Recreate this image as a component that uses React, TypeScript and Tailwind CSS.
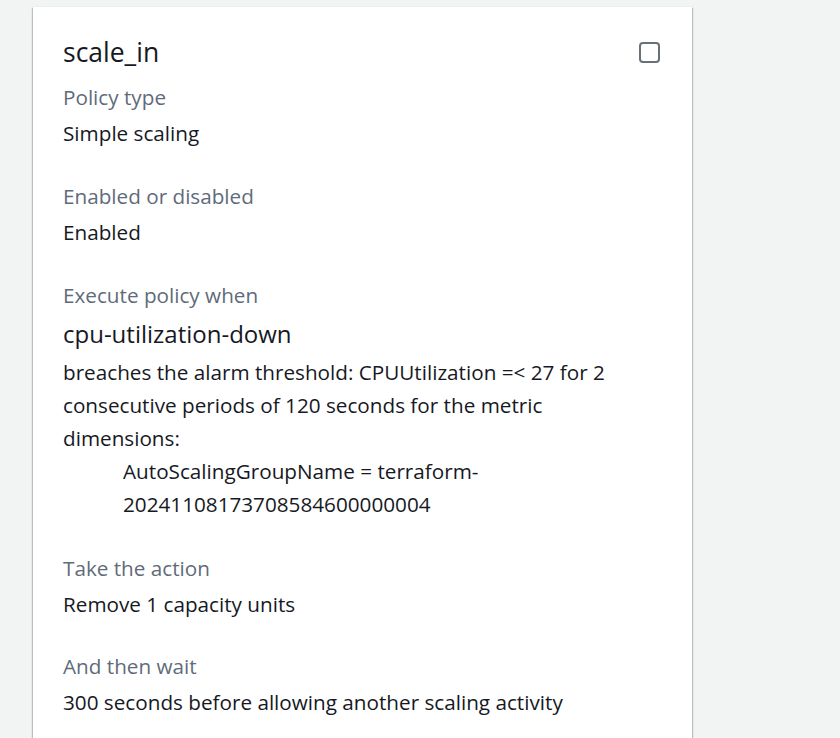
import React from 'react';

const Field: React.FC<{ label: string; children: React.ReactNode }> = ({ label, children }) => (
  <div className="flex flex-col">
    <div className="text-[20.7px] leading-[26px] text-[#5f6b7a]">{label}</div>
    <div className="mt-[10px] text-[20.7px] leading-[26px] text-[#16191f]">{children}</div>
  </div>
);

export default function App() {
  return (
    <div
      className="min-h-[738px] bg-[#f2f3f3] pt-[7px] pl-[33px] overflow-hidden"
      style={{ fontFamily: '"Open Sans", "Noto Sans", Arial, sans-serif' }}
    >
      <div className="w-[659px] h-[760px] bg-white shadow-[0_1px_2px_rgba(0,28,36,0.3),1px_1px_1px_rgba(0,28,36,0.15),-1px_1px_1px_rgba(0,28,36,0.15)] px-[30px] pt-[30px]">
        <div className="flex items-start justify-between">
          <h2 className="text-[26.5px] leading-[30px] text-[#16191f]">scale_in</h2>
          {/* checkbox */}
          <div className="mt-[5px] mr-[2px] w-[21px] h-[21px] rounded-[4px] border-2 border-[#687078]" />
        </div>
        <div className="mt-[17px] flex flex-col">
          <Field label="Policy type">Simple scaling</Field>
          <div className="mt-[37px]">
            <Field label="Enabled or disabled">Enabled</Field>
          </div>
          <div className="mt-[37px] flex flex-col">
            <div className="text-[20.7px] leading-[26px] text-[#5f6b7a]">Execute policy when</div>
            <div className="mt-[12px] text-[24px] leading-[28px] text-[#16191f]">cpu-utilization-down</div>
            <div className="mt-[8px] text-[20.7px] leading-[33px] text-[#16191f] pr-[40px]">
              breaches the alarm threshold: CPUUtilization =&lt; 27 for 2 consecutive periods of 120 seconds for the metric dimensions:
              <div className="pl-[60px]">AutoScalingGroupName = terraform-20241108173708584600000004</div>
            </div>
          </div>
          <div className="mt-[34px]">
            <Field label="Take the action">Remove 1 capacity units</Field>
          </div>
          <div className="mt-[36px]">
            <Field label="And then wait">300 seconds before allowing another scaling activity</Field>
          </div>
        </div>
      </div>
    </div>
  );
}
